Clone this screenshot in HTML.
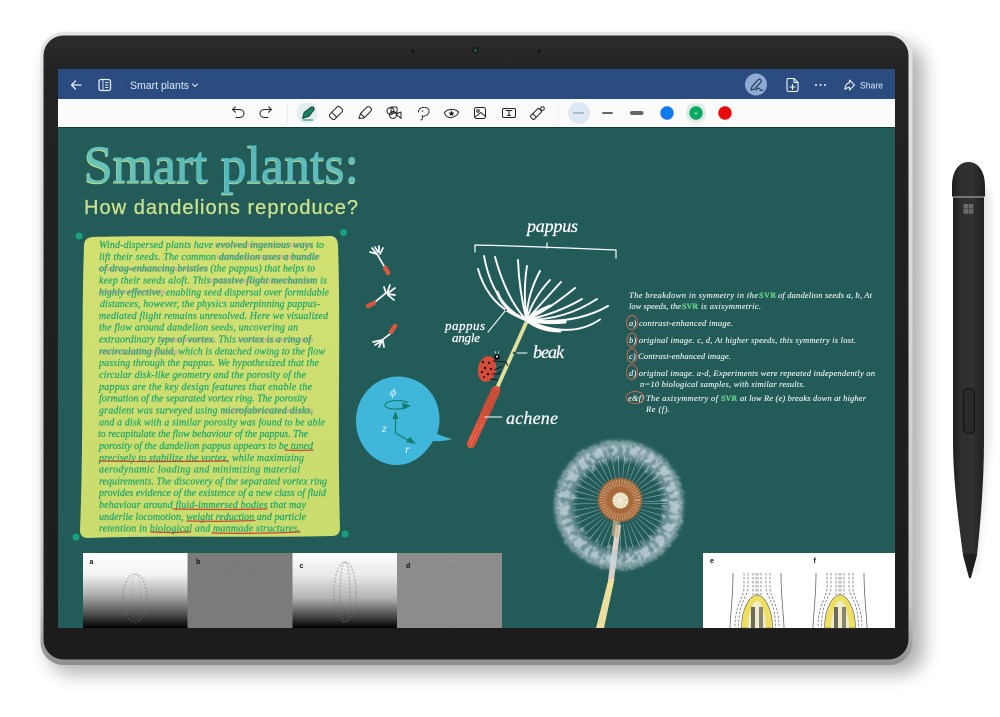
<!DOCTYPE html>
<html lang="en">
<head>
<meta charset="utf-8">
<title>Smart plants</title>
<style>
html,body{margin:0;padding:0;background:#fff;width:1000px;height:717px;overflow:hidden}
svg{display:block;filter:blur(.3px)}
.n text{font:italic 10px "Liberation Serif",serif;fill:#1ea869;stroke:#1ea869;stroke-width:.22}
.r text{font:italic 8.500px "Liberation Serif",serif;fill:#f2f6f0;stroke:#f2f6f0;stroke-width:.1}
.r text.g{fill:#45d86c;font-weight:bold;font-style:normal;font-size:8px}
.h{font:italic 15px "Liberation Serif",serif;fill:#fff;stroke:#fff;stroke-width:.25}
.i{fill:none;stroke:#222;stroke-width:1;stroke-linecap:round;stroke-linejoin:round}
.w{fill:none;stroke:#fff;stroke-linecap:round;stroke-linejoin:round}
.st{fill:#c9a0a0;opacity:.55}
.ul{stroke:#c94a33;stroke-width:1.300;fill:none;stroke-linecap:round}
.hair{fill:none;stroke:#fff;stroke-width:1.900;stroke-linecap:round}
.lb{font:bold 7px "Liberation Sans",sans-serif;fill:#111}
</style>
</head>
<body>
<svg width="1000" height="717" viewBox="0 0 1000 717" xmlns="http://www.w3.org/2000/svg">
<defs>
<filter id="sh" x="-10%" y="-10%" width="120%" height="120%"><feGaussianBlur stdDeviation="9"/></filter>
<filter id="sh2" x="-100%" y="-10%" width="300%" height="120%"><feGaussianBlur stdDeviation="4"/></filter>
<filter id="b1" x="-20%" y="-20%" width="140%" height="140%"><feGaussianBlur stdDeviation=".6"/></filter>
<filter id="b2" x="-20%" y="-20%" width="140%" height="140%"><feGaussianBlur stdDeviation="2.500"/></filter>
<filter id="fz" x="-20%" y="-20%" width="140%" height="140%"><feTurbulence type="fractalNoise" baseFrequency=".2" numOctaves="2" seed="4"/><feDisplacementMap in="SourceGraphic" scale="9" xChannelSelector="R" yChannelSelector="G"/><feGaussianBlur stdDeviation=".8"/></filter>
<linearGradient id="sil" x1="0" y1="0" x2="0" y2="1"><stop offset="0" stop-color="#e4e4e4"/><stop offset=".9" stop-color="#c8c8c8"/><stop offset="1" stop-color="#8e8e8e"/></linearGradient>
<linearGradient id="bez" x1="0" y1="0" x2="0" y2="1"><stop offset="0" stop-color="#2c2c2c"/><stop offset=".06" stop-color="#222"/><stop offset="1" stop-color="#1c1c1c"/></linearGradient>
<linearGradient id="ttl" x1="0" y1="0" x2="1" y2="0"><stop offset="0" stop-color="#6cc3b6"/><stop offset=".5" stop-color="#52b8bc"/><stop offset="1" stop-color="#62bdbb"/></linearGradient>
<linearGradient id="ia" x1="0" y1="0" x2="0" y2="1"><stop offset="0" stop-color="#fff"/><stop offset=".28" stop-color="#f4f4f4"/><stop offset=".55" stop-color="#b0b0b0"/><stop offset=".8" stop-color="#555"/><stop offset="1" stop-color="#000"/></linearGradient>
<linearGradient id="ic" x1="0" y1="0" x2="0" y2="1"><stop offset="0" stop-color="#fff"/><stop offset=".3" stop-color="#e8e8e8"/><stop offset=".6" stop-color="#b2b2b2"/><stop offset=".85" stop-color="#444"/><stop offset="1" stop-color="#000"/></linearGradient>
<linearGradient id="pen" x1="0" y1="0" x2="1" y2="0"><stop offset="0" stop-color="#1c1c1c"/><stop offset=".25" stop-color="#2e2e2e"/><stop offset=".6" stop-color="#323232"/><stop offset="1" stop-color="#1e1e1e"/></linearGradient>
<linearGradient id="note" x1="0" y1="0" x2="0" y2="1"><stop offset="0" stop-color="#d2e072"/><stop offset="1" stop-color="#cadc6e"/></linearGradient>
<g id="flow">
  <path d="M-24,-20 C-24,5 -27,25 -27,35" fill="none" stroke="#666" stroke-width=".8"/>
  <path d="M24,-20 C24,5 27,25 27,35" fill="none" stroke="#666" stroke-width=".8"/>
  <g fill="none" stroke="#777" stroke-width=".8" stroke-dasharray="2.500 1.500">
    <path d="M-13,-20 V-5 C-13,5 -22,10 -22,35"/><path d="M13,-20 V-5 C13,5 22,10 22,35"/>
    <path d="M-9,-20 V-5 C-9,3 -18.500,8 -18.500,35"/><path d="M9,-20 V-5 C9,3 18.500,8 18.500,35"/>
    <path d="M-4,-20 V2"/><path d="M4,-20 V2"/><path d="M-1,-20 V2"/><path d="M1,-20 V2"/>
  </g>
  <path d="M-15.500,35 C-15.500,15 -7,2 0,2 C7,2 15.500,15 15.500,35 Z" fill="#eede62" stroke="#555" stroke-width=".6"/>
  <path d="M-9,35 C-9,20 -4,8 0,8 C4,8 9,20 9,35 Z" fill="#efeccd"/>
  <rect x="-6" y="14" width="4" height="21" fill="#6d6b58"/>
  <rect x="2" y="14" width="4" height="21" fill="#87856c"/>
</g>
</defs>
<rect width="1000" height="717" fill="#fff"/>

<!-- tablet -->
<rect x="48" y="44" width="876" height="630" rx="24" fill="#000" opacity=".3" filter="url(#sh)"/>
<rect x="40.500" y="32" width="872" height="633" rx="23" fill="url(#sil)"/>
<rect x="43.500" y="35.500" width="865" height="624" rx="20" fill="url(#bez)"/>
<circle cx="413" cy="51" r="1.300" fill="#0a0a0a"/><circle cx="539" cy="51" r="1.300" fill="#0a0a0a"/>
<circle cx="475.500" cy="50.500" r="4" fill="#161b1b" stroke="#333" stroke-width=".6"/><circle cx="475.500" cy="50.500" r="1.200" fill="#2f7d70"/>

<!-- screen -->
<rect x="58" y="69" width="837" height="30" fill="#2a4c80"/>
<rect x="58" y="99" width="837" height="28" fill="#fbfbfb"/>
<rect x="58" y="127" width="837" height="501" fill="#235b59"/>
<rect x="58" y="127" width="837" height="1" fill="#123a3a"/>

<!-- header -->
<g class="w" stroke-width="1.300" style="stroke:#e8eef6">
  <path d="M71.500,85 H81 M75.500,81 L71.500,85 L75.500,89"/>
  <rect x="99" y="80" width="11.500" height="11" rx="2" transform="translate(0,-.500)"/>
  <path d="M103,80 V90.500 M105.500,82.500 H108 M105.500,85 H108 M105.500,87.500 H108" stroke-width=".9"/>
  <path d="M192.500,84 L195,86.500 L197.500,84" stroke-width="1"/>
</g>
<rect x="121" y="75" width=".6" height="18" fill="#3a5c90"/>
<text x="130" y="89" font-family="Liberation Sans, sans-serif" font-size="11" fill="#dfe7f3" textLength="59" lengthAdjust="spacingAndGlyphs">Smart plants</text>
<circle cx="756" cy="84.500" r="11" fill="#8dabd2"/>
<g class="i" style="stroke:#1c2c44">
  <path d="M751,90 L752,86.500 L758.500,79.500 C760,78.500 762,80.500 761,82 L754.500,89 Z"/>
  <path d="M756,90.500 C757,87.500 760,87.500 760,89.500 C760,91 762,90.500 763,90"/>
</g>
<g class="w" stroke-width="1.100" style="stroke:#f2f5fa">
  <path d="M788,78.500 H794 L798,82.500 V89.500 Q798,91.500 796,91.500 H789 Q787,91.500 787,89.500 V80.500 Q787,78.500 788,78.500 Z"/>
  <path d="M794,78.500 V82.500 H798 M792.500,84.500 V89.500 M790,87 H795"/>
</g>
<circle cx="816" cy="85" r="1" fill="#eef2f8"/><circle cx="820.500" cy="85" r="1" fill="#eef2f8"/><circle cx="825" cy="85" r="1" fill="#eef2f8"/>
<path class="w" stroke-width="1.100" style="stroke:#e8eef6" d="M849.500,80 L854.500,85 L849.500,90 V87.300 C847,87.300 846,88.500 845,89.500 C845,85.500 847,83 849.500,82.700 Z"/>
<text x="860" y="88.500" font-family="Liberation Sans, sans-serif" font-size="9.500" fill="#dfe7f3" textLength="23" lengthAdjust="spacingAndGlyphs">Share</text>

<!-- toolbar -->
<g class="i">
  <path d="M232.500,109.500 H240 A4,4 0 0 1 240,117.500 H236 M235.500,106.800 L232.500,109.500 L235.500,112.300"/>
  <path d="M271.500,109.500 H264 A4,4 0 0 0 264,117.500 H268 M268.500,106.800 L271.500,109.500 L268.500,112.300"/>
</g>
<rect x="287" y="103" width=".7" height="20" fill="#e5e5e5"/>
<circle cx="307" cy="113" r="10.500" fill="#e2eef2"/>
<path d="M302.500,118.500 L304,112.500 L311,107 C313,106 315,108 314,110 L309,116.500 Z" fill="#17815f" stroke="#222" stroke-width=".7"/>
<path d="M303,120 H313" stroke="#17815f" stroke-width="1"/>
<g class="i">
  <g transform="rotate(-45 336 113)"><rect x="329" y="109.500" width="14" height="7" rx="2"/><path d="M333.500,109.500 V116.500"/></g>
  <path d="M359,118.500 L360.500,113.500 L367,107 Q369,106 371,108 Q372,110 370.500,111.500 L364,118 Z M360.500,113.500 L364.500,117.500"/>
  <circle cx="390.500" cy="111" r="3.500"/><rect x="391" y="107" width="6" height="6" rx="1"/><circle cx="393" cy="115" r="3.500"/><path d="M396,114 L401,112 V118.500 Z"/>
  <path d="M418.500,112 C418,107 428,105.500 429,110.500 C429.500,115 425,116.500 422,116 M422,116 C423,117.500 423,119 421,120 M422,111 H423" stroke-dasharray="2 1"/>
  <path d="M444.500,113 C446,109 455,108 458.500,112 C458,116 452,118 449,117.500 C447,117 445,115 444.500,113 Z"/><path d="M451.500,110.500 L452.500,112.500 L454.500,112.800 L453,114.200 L453.400,116 L451.500,115 L449.700,116 L450,114.200 L448.500,112.800 L450.500,112.500 Z" fill="#222" stroke="none"/>
  <rect x="474.500" y="107.500" width="11" height="11" rx="2"/><circle cx="478" cy="111" r="1.200"/><path d="M475,117 L481,112.500 L485,116"/>
  <rect x="502.500" y="108.500" width="13" height="9" rx="1.500"/><path d="M506,110.500 H512 M509,110.500 V115.500 M507.500,115.500 H510.500"/>
  <g transform="rotate(-45 536 114)"><rect x="530" y="111.500" width="12" height="5" rx="1.200"/><path d="M534,111.500 V116.500"/></g>
  <circle cx="542.500" cy="108.500" r="1.800"/>
</g>
<rect x="558" y="103" width=".7" height="20" fill="#e5e5e5"/>
<circle cx="579" cy="113" r="11" fill="#dde8f3"/>
<rect x="573" y="112.400" width="11" height="1.200" fill="#8ea0b2"/>
<rect x="602" y="112" width="11" height="2" rx="1" fill="#666"/>
<rect x="630" y="111" width="13.500" height="4" rx="2" fill="#666"/>
<circle cx="667" cy="113" r="6.700" fill="#0f7bf0"/>
<circle cx="696" cy="113" r="10" fill="#dfe9e5"/>
<circle cx="696" cy="113" r="6.700" fill="#0aa860"/>
<path d="M694.500,112.500 L696,114 L697.500,112.500" fill="none" stroke="#dff5ea" stroke-width=".8"/>
<circle cx="725" cy="113" r="6.700" fill="#e80b0b"/>

<!-- title -->
<text x="83.400" y="183.400" font-family="Liberation Serif, serif" font-size="53" fill="#cfe486" textLength="275.500" lengthAdjust="spacingAndGlyphs" stroke="#cfe486" stroke-width=".5">Smart plants:</text>
<text x="84" y="182.500" font-family="Liberation Serif, serif" font-size="53" fill="url(#ttl)" stroke="url(#ttl)" stroke-width=".8" textLength="275" lengthAdjust="spacingAndGlyphs">Smart plants:</text>
<text x="84" y="214" font-family="Liberation Sans, sans-serif" font-size="20" fill="#cbe28c" stroke="#cbe28c" stroke-width=".3" textLength="274" lengthAdjust="spacing">How dandelions reproduce?</text>

<!-- sticky note -->
<path d="M92,237 C150,235 260,238 330,236 Q338,236 338,246 C341,330 337,430 340,528 Q340,536 332,536 C250,538 170,535 88,538 Q80,538 80,530 C84,430 81,330 84,246 Q84,238 92,237 Z" fill="url(#note)"/>
<circle cx="79" cy="236" r="3.500" fill="#16a27e"/><circle cx="343.500" cy="232.500" r="3.500" fill="#16a27e"/>
<circle cx="76" cy="537" r="3.500" fill="#16a27e"/><circle cx="345" cy="534" r="3.500" fill="#16a27e"/>

<g>
<rect class="st" x="215" y="243" width="98" height="4"/>
<rect class="st" x="217" y="255" width="103" height="4"/>
<rect class="st" x="99" y="267" width="109" height="4"/>
<rect class="st" x="208" y="279" width="107" height="4"/>
<rect class="st" x="99" y="290" width="66" height="4"/>
<rect class="st" x="160" y="338" width="55" height="4"/>
<rect class="st" x="238" y="338" width="75" height="4"/>
<rect class="st" x="99" y="350" width="79" height="4"/>
<rect class="st" x="223" y="409" width="90" height="4"/>
</g>
<g class="n">
<text x="99" y="248" textLength="225" lengthAdjust="spacing">Wind-dispersed plants have evolved ingenious ways to</text>
<text x="99" y="259.800" textLength="220" lengthAdjust="spacing">lift their seeds. The common dandelion uses a bundle</text>
<text x="99" y="271.600" textLength="216" lengthAdjust="spacing">of drag-enhancing bristles (the pappus) that helps to</text>
<text x="99" y="283.500" textLength="228" lengthAdjust="spacing">keep their seeds aloft. This passive flight mechanism is</text>
<text x="99" y="295.300" textLength="230" lengthAdjust="spacing">highly effective, enabling seed dispersal over formidable</text>
<text x="100" y="307.100" textLength="220" lengthAdjust="spacing">distances, however, the physics underpinning pappus-</text>
<text x="99" y="318.900" textLength="229" lengthAdjust="spacing">mediated flight remains unresolved. Here we visualized</text>
<text x="99" y="330.700" textLength="199" lengthAdjust="spacing">the flow around dandelion seeds, uncovering an</text>
<text x="99" y="342.600" textLength="212" lengthAdjust="spacing">extraordinary type of vortex. This vortex is a ring of</text>
<text x="99" y="354.400" textLength="226" lengthAdjust="spacing">recirculating fluid, which is detached owing to the flow</text>
<text x="99" y="366.200" textLength="220" lengthAdjust="spacing">passing through the pappus. We hypothesized that the</text>
<text x="99" y="378" textLength="207" lengthAdjust="spacing">circular disk-like geometry and the porosity of the</text>
<text x="99" y="389.800" textLength="213" lengthAdjust="spacing">pappus are the key design features that enable the</text>
<text x="99" y="401.700" textLength="208" lengthAdjust="spacing">formation of the separated vortex ring. The porosity</text>
<text x="99" y="413.500" textLength="214" lengthAdjust="spacing">gradient was surveyed using microfabricated disks,</text>
<text x="99" y="425.300" textLength="226" lengthAdjust="spacing">and a disk with a similar porosity was found to be able</text>
<text x="98" y="437.100" textLength="210" lengthAdjust="spacing">to recapitulate the flow behaviour of the pappus. The</text>
<text x="99" y="448.900" textLength="214" lengthAdjust="spacing">porosity of the dandelion pappus appears to be tuned</text>
<text x="99" y="460.800" textLength="205" lengthAdjust="spacing">precisely to stabilize the vortex, while maximizing</text>
<text x="99" y="472.600" textLength="201" lengthAdjust="spacing">aerodynamic loading and minimizing material</text>
<text x="99" y="484.400" textLength="228" lengthAdjust="spacing">requirements. The discovery of the separated vortex ring</text>
<text x="99" y="496.200" textLength="227" lengthAdjust="spacing">provides evidence of the existence of a new class of fluid</text>
<text x="99" y="508" textLength="207" lengthAdjust="spacing">behaviour around fluid-immersed bodies that may</text>
<text x="99" y="519.900" textLength="207" lengthAdjust="spacing">underlie locomotion, weight reduction and particle</text>
<text x="99" y="531.700" textLength="201" lengthAdjust="spacing">retention in biological and manmade structures.</text>
</g>
<g class="ul">
<path d="M285,450 Q300,451 313,450"/>
<path d="M99,461 Q160,462 227,461"/>
<path d="M173,509 Q220,510 267,509"/>
<path d="M187,521 Q220,522 255,520.500"/>
<path d="M151,532 Q170,533 190,532"/>
<path d="M212,533 Q255,534 300,532"/>
</g>

<!-- small seeds -->
<g class="w" stroke-width="1.700">
  <path d="M384,266 L377,254 M377,254 L370,252 M377,254 L372,248 M378,252 L375,247 M379,252 L379,246 M380,254 L383,248"/>
  <path d="M375,302 L386,293 M386,293 L384,287 M387,293 L390,285 M388,293 L395,288 M388,294 L395,295 M388,295 L394,300"/>
  <path d="M390,334 L382,340 M382,340 L373,342 M382,341 L375,345 M382,341 L379,347 M383,341 L384,347"/>
</g>
<g stroke="#d9563f" stroke-linecap="round" stroke-width="4.500" fill="none">
  <path d="M385.500,268 L388,273"/>
  <path d="M368,306 L374,303"/>
  <path d="M395,326 L391,332"/>
</g>

<!-- bubble -->
<path d="M398,376.500 C422,376.500 440,396 439.500,420 C439.500,425 438.500,430 437,433.500 C441,436 447,437.500 452,439 C446,441 439,441.500 433,441 C425,455 412,465 397,465 C374,465 356,445 356,421 C356,397 374,376.500 398,376.500 Z" fill="#3fb6da"/>
<text x="390" y="396" font-family="Liberation Serif, serif" font-style="italic" font-size="12" fill="#e8fbff">ϕ</text>
<path d="M408,403 C404,399 385,400 385,405 C385,410 402,410 407,407" fill="none" stroke="#147c68" stroke-width="1.100"/>
<path d="M402,402.500 L411,406 L403,409 Z" fill="#147c68"/>
<path d="M395.500,433 V415 M395.500,433 L411,442" fill="none" stroke="#147c68" stroke-width="1.200"/>
<path d="M395.500,411 L392.500,419 H398.500 Z M416,444 L406,442 L410,437 Z" fill="#147c68"/>
<text x="382" y="432" font-family="Liberation Serif, serif" font-style="italic" font-size="12" fill="#e8fbff">z</text>
<text x="405" y="453" font-family="Liberation Serif, serif" font-style="italic" font-size="12" fill="#e8fbff">r</text>

<!-- pappus diagram -->
<path class="w" stroke-width="1.200" d="M475,252 V245 C520,246 570,248 616,250 V258 M547,243 V248"/>
<text class="h" x="527" y="232" style="font-size:18px" textLength="51" lengthAdjust="spacing">pappus</text>
<g class="hair">
<path d="M526.500,320 Q493,305 484,256"/>
<path d="M526.500,320 Q489,308 478,269"/>
<path d="M526.500,320 Q507,300 495,257"/>
<path d="M526.500,320 Q519,290 518,260"/>
<path d="M526.500,320 Q523,290 527,266"/>
<path d="M526.500,320 Q527,295 540,271"/>
<path d="M526.500,320 Q533,298 550,280"/>
<path d="M526.500,320 Q540,305 561,282"/>
<path d="M526.500,320 Q548,310 575,288"/>
<path d="M526.500,320 Q556,314 582,299"/>
<path d="M526.500,320 Q565,320 597,299"/>
<path d="M526.500,320 Q575,325 608,306"/>
<path d="M526.500,320 Q570,340 600,319.500"/>
</g>
<g class="hair" style="stroke-width:3">
<path d="M526.500,320 Q505,312 497,292"/>
<path d="M526.500,320 Q535,312 550,306"/>
<path d="M526.500,320 Q545,324 565,322"/>
<path d="M526.500,320 Q540,331 560,331"/>
</g>
<path d="M526.500,322 L497,388" stroke="#e2df9c" stroke-width="3.800" fill="none"/>
<path d="M496,390 L471,444" stroke="#d9523c" stroke-width="8.500" stroke-linecap="round" fill="none"/>
<path d="M496,390 L484,416" stroke="#b84a30" stroke-width="10.500" stroke-dasharray="1.200 1.500" fill="none"/>
<path d="M482,424 L470,446 M478,424 L469,442" stroke="#ef8a70" stroke-width=".5" fill="none"/>
<ellipse cx="487" cy="369" rx="9" ry="13" transform="rotate(12 487 369)" fill="#d94c38"/>
<g fill="#1a1a1a"><circle cx="483" cy="362" r="1.200"/><circle cx="489" cy="363" r="1.200"/><circle cx="485" cy="368" r="1.300"/><circle cx="491" cy="369" r="1.200"/><circle cx="482" cy="372" r="1.200"/><circle cx="488" cy="374" r="1.300"/><circle cx="484" cy="377" r="1"/></g>
<circle cx="497" cy="357" r="3" fill="#111"/><circle cx="497" cy="356.500" r="1" fill="#fff"/>
<path d="M493,361 L506,362 L508,366 M494,370 L503,366 M492,374 L498,374 L501,371 M490,379 L498,380" fill="none" stroke="#111" stroke-width=".9"/>
<path d="M496,354 L495,351 M498,354 L499,351" stroke="#ddd" stroke-width=".7"/>
<path class="w" stroke-width="1" d="M488,332 L506,310 M517,353 H527 M485,417 H502"/>
<circle cx="514" cy="353" r="1.200" fill="#235b59"/><circle cx="506" cy="310" r="1" fill="#235b59"/>
<text class="h" x="445" y="330" style="font-size:13px" textLength="40" lengthAdjust="spacing">pappus</text>
<text class="h" x="452" y="342" style="font-size:13px" textLength="28" lengthAdjust="spacing">angle</text>
<text class="h" x="533" y="358" style="font-size:18px" textLength="31" lengthAdjust="spacing">beak</text>
<text class="h" x="506" y="424" style="font-size:18px" textLength="52" lengthAdjust="spacing">achene</text>

<!-- right notes -->
<g class="r">
<text x="629" y="298" textLength="129" lengthAdjust="spacing">The breakdown in symmetry in the</text>
<text class="g" x="759" y="298" textLength="17" lengthAdjust="spacing">SVR</text>
<text x="778" y="298" textLength="94" lengthAdjust="spacing">of dandelion seeds a, b, At</text>
<text x="629" y="309" textLength="52" lengthAdjust="spacing">low speeds, the</text>
<text class="g" x="682" y="309" textLength="16" lengthAdjust="spacing">SVR</text>
<text x="701" y="309" textLength="60" lengthAdjust="spacing">is axisymmetric.</text>
<text x="629" y="326" textLength="104" lengthAdjust="spacing">a) contrast-enhanced image.</text>
<text x="629" y="343" textLength="227" lengthAdjust="spacing">b) original image. c, d, At higher speeds, this symmetry is lost.</text>
<text x="629" y="359" textLength="102" lengthAdjust="spacing">c) Contrast-enhanced image.</text>
<text x="629" y="376" textLength="246" lengthAdjust="spacing">d) original image. a-d, Experiments were repeated independently on</text>
<text x="640" y="387" textLength="165" lengthAdjust="spacing">n=10 biological samples, with similar results.</text>
<text x="628" y="401" textLength="16" lengthAdjust="spacing">e&amp;f)</text>
<text x="646" y="401" textLength="72" lengthAdjust="spacing">The axisymmetry of</text>
<text class="g" x="721" y="401" textLength="16" lengthAdjust="spacing">SVR</text>
<text x="740" y="401" textLength="126" lengthAdjust="spacing">at low Re (e) breaks down at higher</text>
<text x="646" y="412" textLength="24" lengthAdjust="spacing">Re (f).</text>
</g>
<g fill="none" stroke="#c8674f" stroke-width="1">
<ellipse cx="632" cy="322.500" rx="5.500" ry="7"/>
<ellipse cx="632" cy="340" rx="5" ry="7"/>
<ellipse cx="632" cy="355.500" rx="5" ry="7"/>
<ellipse cx="632" cy="372" rx="5.500" ry="7.500"/>
<ellipse cx="635" cy="397.500" rx="9" ry="6"/>
</g>

<!-- dandelion -->
<path d="M615.500,525 L621,525 L614,580 L608,580 Z" fill="#d9cfc8"/>
<path d="M608.500,579 L614.500,579 L604,628 L596,628 Z" fill="#ecdf9e"/>
<circle cx="619" cy="505" r="55" fill="none" stroke="#b7c8d1" stroke-width="18" opacity=".5" filter="url(#b2)"/>
<g fill="none" filter="url(#fz)">
  <circle cx="619" cy="505" r="61" stroke="#d3dfe6" stroke-width="8" stroke-dasharray="1 1.400" opacity=".6"/>
  <circle cx="619" cy="505" r="55" stroke="#cbd8e0" stroke-width="9" stroke-dasharray="7 3 4 4 9 2 3 4" opacity=".7"/>
  <circle cx="619" cy="505" r="45" stroke="#dbe6ea" stroke-width="5" stroke-dasharray="2 8 3 11 1.500 9" opacity=".5"/>
</g>
<circle cx="620" cy="503" r="34" fill="none" stroke="#e8f0f2" stroke-width="26" stroke-dasharray=".6 4.200" opacity=".55"/>
<circle cx="620" cy="500" r="22" fill="#a86a3c" filter="url(#b1)"/>
<circle cx="620" cy="500" r="17" fill="none" stroke="#d8b48a" stroke-width="7" stroke-dasharray=".8 1.600" opacity=".8"/>
<circle cx="620.500" cy="500.500" r="8" fill="#f3ebd3"/>
<circle cx="620.500" cy="500.500" r="5" fill="none" stroke="#c9b58c" stroke-width="5" stroke-dasharray=".7 2" opacity=".7"/>
<path d="M613,520 L620,522 L618,538 L612,536 Z" fill="#cdb78a" opacity=".7"/>

<!-- bottom images -->
<rect x="83" y="553" width="104.500" height="75" fill="url(#ia)"/>
<rect x="187.500" y="553" width="105" height="75" fill="#7b7b7b"/>
<rect x="292.500" y="553" width="104.500" height="75" fill="url(#ic)"/>
<rect x="397" y="553" width="105" height="75" fill="#8c8c8c"/>
<g fill="none" stroke="#777" stroke-width="1.500" stroke-dasharray="2 1.500" opacity=".4">
<ellipse cx="135" cy="598" rx="12" ry="24"/>
<ellipse cx="136" cy="598" rx="5" ry="24" opacity=".5"/>
<ellipse cx="345" cy="592" rx="11" ry="30"/>
<ellipse cx="345" cy="592" rx="5" ry="30"/>
</g>
<ellipse cx="240" cy="592" rx="11" ry="28" fill="none" stroke="#808080" stroke-width="1" stroke-dasharray="2 3"/>
<ellipse cx="450" cy="592" rx="11" ry="32" fill="none" stroke="#949494" stroke-width="1" stroke-dasharray="2 3"/>
<text class="lb" x="89.500" y="564">a</text><text class="lb" x="196" y="564">b</text><text class="lb" x="299.500" y="568">c</text><text class="lb" x="406" y="568">d</text>

<rect x="703" y="553" width="192" height="75" fill="#fff"/>
<g transform="translate(757 593)"><use href="#flow"/></g>
<g transform="translate(840 593)"><use href="#flow"/></g>
<text class="lb" x="710" y="563">e</text><text class="lb" x="813.500" y="563">f</text>

<!-- pen -->
<path d="M960,180 L990,190 L990,440 L976,575 L972,575 Z" fill="#000" opacity=".1" filter="url(#sh2)"/>
<path d="M952,196 V186 C952,171 959,162 968.500,162 C978,162 985,171 985,186 V196 L984,197 V440 C984,478 981,518 977,555 L971,577.500 Q970,579 969,577.500 L963,555 C958,518 953,478 953,440 V197 Z" fill="url(#pen)"/>
<path d="M963,555 Q970,552 977,555 L971,577.500 Q970,579 969,577.500 Z" fill="#1e1e1e"/>
<path d="M952,197 H985" stroke="#bdbdbd" stroke-width="1"/>
<g fill="#6a6a6a"><rect x="963.500" y="204" width="4.600" height="4.600"/><rect x="968.700" y="204" width="4.600" height="4.600"/><rect x="963.500" y="209.200" width="4.600" height="4.600"/><rect x="968.700" y="209.200" width="4.600" height="4.600"/></g>
<rect x="963.500" y="388.500" width="11" height="45" rx="5" fill="#2a2a2a" stroke="#111" stroke-width="1"/>
</svg>
</body>
</html>
